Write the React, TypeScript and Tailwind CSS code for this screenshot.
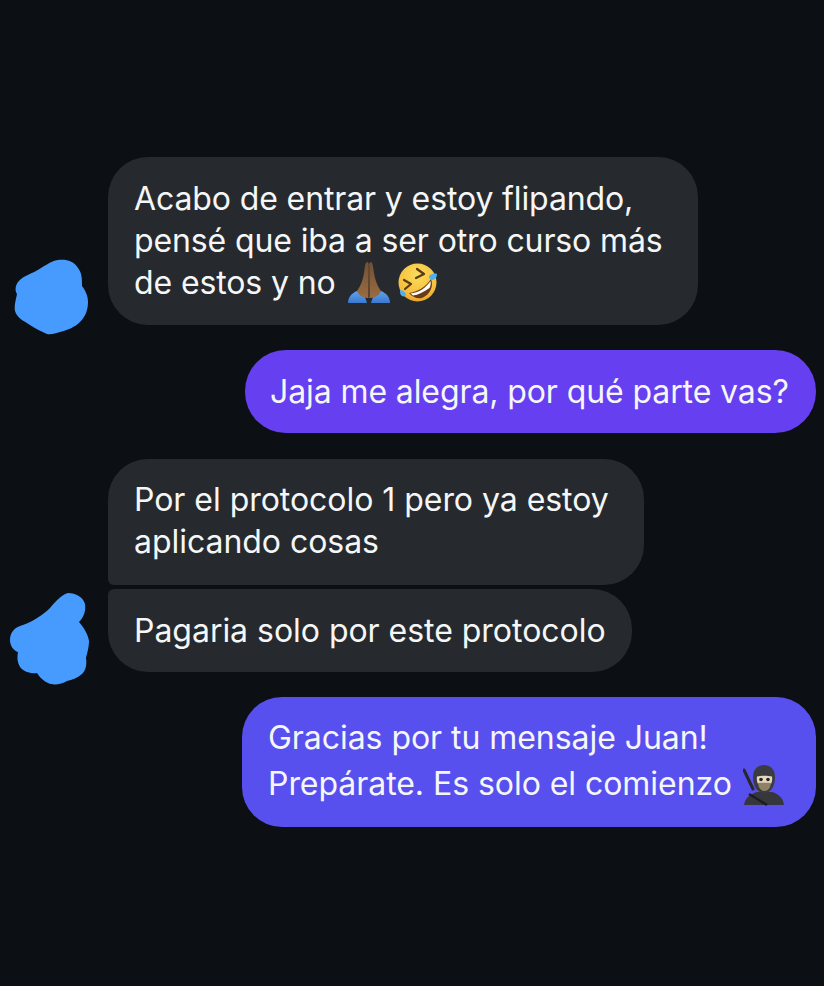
const textFont = "font-['Inter','Liberation_Sans',sans-serif]";

const PrayEmoji = () => (
  <svg width="44" height="42" viewBox="0 0 44 42" className="shrink-0">
    <defs>
      <linearGradient id="prayHand" x1="0" y1="0" x2="0" y2="1">
        <stop offset="0" stopColor="#6f5038" />
        <stop offset="1" stopColor="#9a6c40" />
      </linearGradient>
      <linearGradient id="praySleeve" x1="0" y1="0" x2="0" y2="1">
        <stop offset="0" stopColor="#5ea4ee" />
        <stop offset="1" stopColor="#3b78d0" />
      </linearGradient>
    </defs>
    <path d="M1 41 C1 35 5 31 10 29 L17 32 L20 41 Z" fill="url(#praySleeve)" />
    <path d="M43 41 C43 35 39 31 34 29 L27 32 L24 41 Z" fill="url(#praySleeve)" />
    <path d="M20 0 C18 1 18 5 17 11 C16 18 13 25 10 29 C12 34 17 36 21.5 36 L22 4 C22 1 21 0 20 0 Z" fill="url(#prayHand)" />
    <path d="M24 0 C26 1 26 5 27 11 C28 18 31 25 34 29 C32 34 27 36 22.5 36 L22 4 C22 1 23 0 24 0 Z" fill="url(#prayHand)" />
    <path d="M22 3 L22 35" stroke="#4f3725" strokeWidth="0.8" />
  </svg>
);

const RoflEmoji = () => (
  <svg width="40" height="40" viewBox="0 0 40 40" className="shrink-0">
    <defs>
      <radialGradient id="roflFace" cx="0.5" cy="0.3" r="0.8">
        <stop offset="0" stopColor="#fbdc5c" />
        <stop offset="0.7" stopColor="#f6bd3c" />
        <stop offset="1" stopColor="#e08d20" />
      </radialGradient>
    </defs>
    <circle cx="19.5" cy="19.5" r="19" fill="url(#roflFace)" />
    <path d="M19 6 L26 11 L18 15" fill="none" stroke="#5a3a12" strokeWidth="2.2" strokeLinecap="round" strokeLinejoin="round" />
    <path d="M6 17 L13 21 L7 26" fill="none" stroke="#5a3a12" strokeWidth="2.2" strokeLinecap="round" strokeLinejoin="round" />
    <path d="M11 30 C19 29 28 24 33 16 C36 23 32 32 24 35 C19 36 14 34 11 30 Z" fill="#6a3a14" />
    <path d="M12.5 30.5 C20 30 28 25 32.5 18 C33 21 32.5 23 31.5 25 C26 29 20 32 15 32.5 Z" fill="#ffffff" />
    <path d="M31 13 C33 11 36 10 39 11 C39 14 37 17 34 17 C32 17 31 15 31 13 Z" fill="#4fb0ec" />
    <path d="M2 27 C4 27 7 29 8 31 C8 33 6 34 4 33 C2 32 2 29 2 27 Z" fill="#4fb0ec" />
  </svg>
);

const NinjaEmoji = () => (
  <svg width="44" height="42" viewBox="0 0 44 42" className="shrink-0">
    <path d="M1 5 L10 24" stroke="#26272b" strokeWidth="3" strokeLinecap="round" />
    <path d="M1 40 C2 33 7 29 14 27 L29 27 C36 29 40 33 41 40 Z" fill="#36373c" />
    <path d="M6 29 L24 40" stroke="#1b1c1f" strokeWidth="2.4" />
    <path d="M10 12 C10 4 15 0 21 0 C27 0 32 4 32 12 C32 21 28 28 21 28 C14 28 10 21 10 12 Z" fill="#3b3c41" />
    <path d="M14 11.5 C18 10.5 25 10.5 29 11.5 C29.5 14 29 17 28 19 L15 19 C14 17 13.5 14 14 11.5 Z" fill="#e6d8bd" />
    <path d="M15 18 C19 17.5 24 17.5 28 18 C27.5 23 25 26 21.5 26 C18 26 15.5 23 15 18 Z" fill="#8f8168" />
    <circle cx="18" cy="14.5" r="1.8" fill="#24242a" />
    <circle cx="25" cy="14.5" r="1.8" fill="#24242a" />
  </svg>
);

const BlobOne = () => (
  <svg width="76" height="78" viewBox="0 0 76 78" className="absolute left-[14px] top-[-66px]">
    <path
      d="M44 1 C52 0 60 2 64 9 C68 14 68 20 68 27 C71 31 74 36 74 43 C74 50 72 57 66 63 C61 68 54 71 46 73 C42 74 37 76 33 75 C27 72 22 70 16 66 C10 62 3 59 1 52 C0 47 2 40 3 35 C1 32 1 27 4 23 C8 18 16 15 22 12 C29 8 37 2 44 1 Z"
      fill="#479bff"
    />
  </svg>
);

const BlobTwo = () => (
  <svg width="80" height="94" viewBox="0 0 80 94" className="absolute left-[10px] top-[-79px]">
    <path
      d="M58 0 C66 0 73 4 75 11 C76 17 74 24 69 29 C74 35 78 41 79 48 C79 54 77 61 76 65 C77 71 76 77 72 81 C67 85 62 87 57 88 C52 91 46 92 41 91 C36 90 30 85 27 80 C21 81 14 79 10 74 C7 69 7 64 8 59 C4 58 0 53 0 47 C0 40 4 35 10 33 C20 30 30 24 38 17 C44 11 50 2 58 0 Z"
      fill="#479bff"
    />
  </svg>
);

export default function App() {
  return (
    <div className={`${textFont} min-h-[986px] w-[824px] overflow-hidden bg-[#0c1014] pt-[157px] text-[32px] whitespace-nowrap text-[#f5f6f7]`}>
      {/* first incoming */}
      <div className="flex items-end">
        <div className="relative h-0 w-[108px] shrink-0">
          <BlobOne />
        </div>
        <div className="h-[168px] w-[590px] rounded-[40px] bg-[#262a2e] px-[26px] py-[21px] leading-[42px] tracking-[-0.12px]">
          <p>Acabo de entrar y estoy flipando,</p>
          <p>pensé que iba a ser otro curso más</p>
          <p className="flex items-center">
            de estos y no
            <span className="ml-[11px] flex items-center gap-[7px]">
              <PrayEmoji />
              <RoflEmoji />
            </span>
          </p>
        </div>
      </div>

      {/* first reply */}
      <div className="mt-[25px] flex justify-end pr-[8px]">
        <div className="flex h-[83px] w-[571px] items-center rounded-[41px] bg-[#653ff0] px-[25px] leading-[42px] tracking-[-0.1px]">
          Jaja me alegra, por qué parte vas?
        </div>
      </div>

      {/* second incoming group */}
      <div className="mt-[26px] flex">
        <div className="w-[108px] shrink-0" />
        <div className="h-[126px] w-[536px] rounded-[40px] rounded-bl-[6px] bg-[#262a2e] px-[26px] py-[20px] leading-[42px] tracking-[-0.04px]">
          <p>Por el protocolo 1 pero ya estoy</p>
          <p>aplicando cosas</p>
        </div>
      </div>
      <div className="mt-[4px] flex items-end">
        <div className="relative h-0 w-[108px] shrink-0">
          <BlobTwo />
        </div>
        <div className="flex h-[83px] w-[524px] items-center rounded-[40px] rounded-tl-[6px] bg-[#262a2e] px-[26px] leading-[42px] tracking-[-0.03px]">
          Pagaria solo por este protocolo
        </div>
      </div>

      {/* second reply */}
      <div className="mt-[25px] flex justify-end pr-[8px]">
        <div className="h-[130px] w-[574px] rounded-[40px] bg-[#5850ee] px-[26px] pt-[18px] leading-[46px] tracking-[-0.05px]">
          <p>Gracias por tu mensaje Juan!</p>
          <p className="flex items-center">
            Prepárate. Es solo el comienzo
            <span className="ml-[11px] mt-[4px]">
              <NinjaEmoji />
            </span>
          </p>
        </div>
      </div>
    </div>
  );
}
